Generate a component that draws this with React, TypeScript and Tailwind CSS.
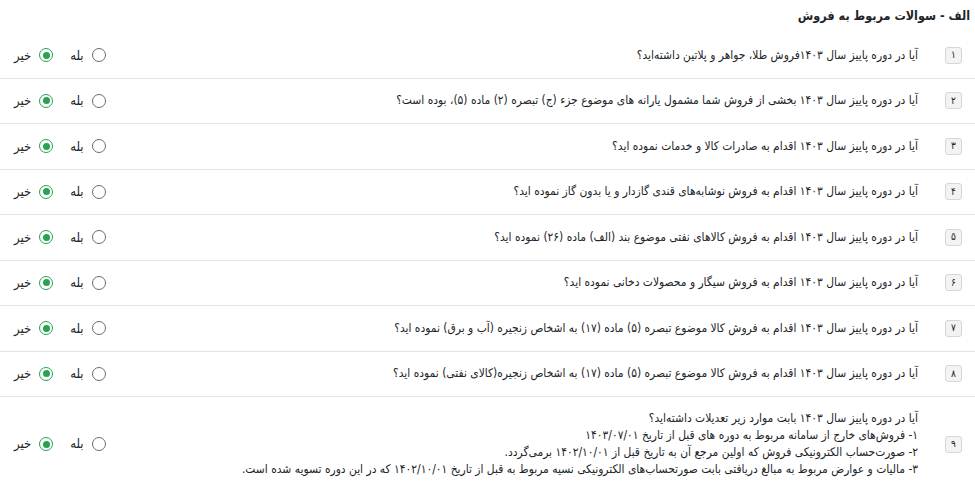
import React from "react";

const questions: { n: string; lines: string[] }[] = [
  { n: "۱", lines: ["آیا در دوره پاییز سال ۱۴۰۳فروش طلا، جواهر و پلاتین داشته‌اید؟"] },
  { n: "۲", lines: ["آیا در دوره پاییز سال ۱۴۰۳ بخشی از فروش شما مشمول یارانه های موضوع جزء (ج) تبصره (۲) ماده (۵)، بوده است؟"] },
  { n: "۳", lines: ["آیا در دوره پاییز سال ۱۴۰۳ اقدام به صادرات کالا و خدمات نموده اید؟"] },
  { n: "۴", lines: ["آیا در دوره پاییز سال ۱۴۰۳ اقدام به فروش نوشابه‌های قندی گازدار و یا بدون گاز نموده اید؟"] },
  { n: "۵", lines: ["آیا در دوره پاییز سال ۱۴۰۳ اقدام به فروش کالاهای نفتی موضوع بند (الف) ماده (۲۶) نموده اید؟"] },
  { n: "۶", lines: ["آیا در دوره پاییز سال ۱۴۰۳ اقدام به فروش سیگار و محصولات دخانی نموده اید؟"] },
  { n: "۷", lines: ["آیا در دوره پاییز سال ۱۴۰۳ اقدام به فروش کالا موضوع تبصره (۵) ماده (۱۷) به اشخاص زنجیره (آب و برق) نموده اید؟"] },
  { n: "۸", lines: ["آیا در دوره پاییز سال ۱۴۰۳ اقدام به فروش کالا موضوع تبصره (۵) ماده (۱۷) به اشخاص زنجیره(کالای نفتی) نموده اید؟"] },
  {
    n: "۹",
    lines: [
      "آیا در دوره پاییز سال ۱۴۰۳ بابت موارد زیر تعدیلات داشته‌اید؟",
      "۱- فروش‌های خارج از سامانه مربوط به دوره های قبل از تاریخ ۱۴۰۳/۰۷/۰۱",
      "۲- صورت‌حساب الکترونیکی فروش که اولین مرجع آن به تاریخ قبل از ۱۴۰۲/۱۰/۰۱ برمی‌گردد.",
      "۳- مالیات و عوارض مربوط به مبالغ دریافتی بابت صورتحساب‌های الکترونیکی نسیه مربوط به قبل از تاریخ ۱۴۰۲/۱۰/۰۱ که در این دوره تسویه شده است.",
    ],
  },
];

function Radio({ checked, label }: { checked: boolean; label: string }) {
  return (
    <label className="flex items-center gap-[8px]">
      <span
        className={
          checked
            ? "grid h-[14px] w-[14px] place-items-center rounded-full border-[1.5px] border-[#27a251]"
            : "h-[14px] w-[14px] rounded-full border-[1.5px] border-[#6b6b6b]"
        }
      >
        {checked && <span className="h-[7px] w-[7px] rounded-full bg-[#27a251]" />}
      </span>
      <span className="text-[13px] text-[#212529]">{label}</span>
    </label>
  );
}

export default function App() {
  return (
    <div
      dir="rtl"
      className="min-h-screen bg-white text-[#212529]"
      style={{ fontFamily: '"DejaVu Sans Condensed", "DejaVu Sans", sans-serif' }}
    >
      <h1 className="flex h-[33px] items-center px-[5px] text-[12.5px] font-bold">الف - سوالات مربوط به فروش</h1>
      <div>
        {questions.map((q, i) => (
          <div
            key={q.n}
            className={
              "flex items-center border-[#e3e3e3] pl-[14px] pr-[13px] " +
              (i < questions.length - 1 ? "h-[45.5px] border-b" : "py-[13px]")
            }
          >
            <span className="grid h-[17px] w-[17px] shrink-0 place-items-center rounded-[3px] border border-[#d6d6d6] bg-[#f3f3f3] text-[10px] leading-none">
              {q.n}
            </span>
            <div className="mr-[27px] text-[11.9px] leading-[17px]">
              {q.lines.map((l) => (
                <p key={l}>{l}</p>
              ))}
            </div>
            <div className="mr-auto flex items-center gap-[17px]">
              <Radio checked={false} label="بله" />
              <Radio checked label="خیر" />
            </div>
          </div>
        ))}
      </div>
    </div>
  );
}
